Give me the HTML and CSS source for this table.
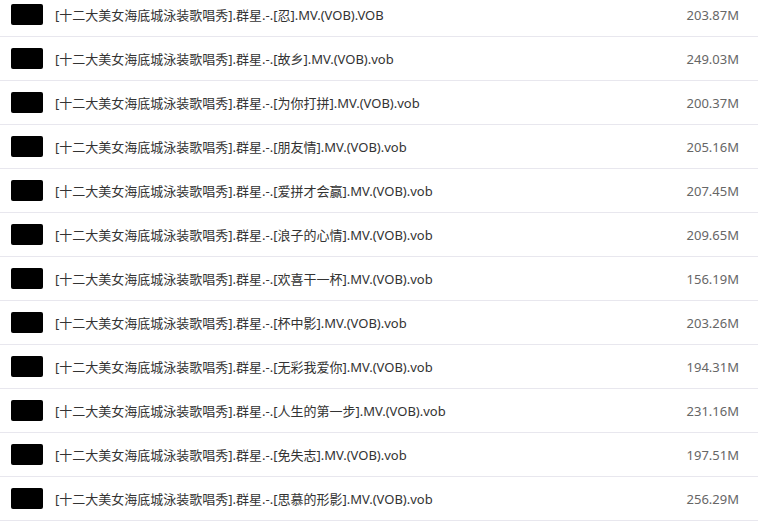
FILE: index.html
```html
<!DOCTYPE html>
<html lang="zh-CN">
<head>
  <meta charset="UTF-8" />
  <title>文件列表</title>
  <link rel="stylesheet" href="styles.css">
</head>
<body>
  <ul class="files">
    <li class="file"><span class="thumb"></span><span class="name">[十二大美女海底城泳装歌唱秀].群星.-.[忍].MV.(VOB).VOB</span><span class="size">203.87M</span></li>
    <li class="file"><span class="thumb"></span><span class="name">[十二大美女海底城泳装歌唱秀].群星.-.[故乡].MV.(VOB).vob</span><span class="size">249.03M</span></li>
    <li class="file"><span class="thumb"></span><span class="name">[十二大美女海底城泳装歌唱秀].群星.-.[为你打拼].MV.(VOB).vob</span><span class="size">200.37M</span></li>
    <li class="file"><span class="thumb"></span><span class="name">[十二大美女海底城泳装歌唱秀].群星.-.[朋友情].MV.(VOB).vob</span><span class="size">205.16M</span></li>
    <li class="file"><span class="thumb"></span><span class="name">[十二大美女海底城泳装歌唱秀].群星.-.[爱拼才会赢].MV.(VOB).vob</span><span class="size">207.45M</span></li>
    <li class="file"><span class="thumb"></span><span class="name">[十二大美女海底城泳装歌唱秀].群星.-.[浪子的心情].MV.(VOB).vob</span><span class="size">209.65M</span></li>
    <li class="file"><span class="thumb"></span><span class="name">[十二大美女海底城泳装歌唱秀].群星.-.[欢喜干一杯].MV.(VOB).vob</span><span class="size">156.19M</span></li>
    <li class="file"><span class="thumb"></span><span class="name">[十二大美女海底城泳装歌唱秀].群星.-.[杯中影].MV.(VOB).vob</span><span class="size">203.26M</span></li>
    <li class="file"><span class="thumb"></span><span class="name">[十二大美女海底城泳装歌唱秀].群星.-.[无彩我爱你].MV.(VOB).vob</span><span class="size">194.31M</span></li>
    <li class="file"><span class="thumb"></span><span class="name">[十二大美女海底城泳装歌唱秀].群星.-.[人生的第一步].MV.(VOB).vob</span><span class="size">231.16M</span></li>
    <li class="file"><span class="thumb"></span><span class="name">[十二大美女海底城泳装歌唱秀].群星.-.[免失志].MV.(VOB).vob</span><span class="size">197.51M</span></li>
    <li class="file"><span class="thumb"></span><span class="name">[十二大美女海底城泳装歌唱秀].群星.-.[思慕的形影].MV.(VOB).vob</span><span class="size">256.29M</span></li>
  </ul>
</body>
</html>
```

FILE: styles.css
```css
* { margin: 0; padding: 0; box-sizing: border-box; }

body {
  background: #fff;
  font-family: "Noto Sans", "Noto Sans CJK SC", sans-serif;
  font-size: 13px;
  color: #333;
  overflow: hidden;
}

.files {
  list-style: none;
  margin-top: -7px;
}

.file {
  display: flex;
  align-items: center;
  height: 44px;
  padding: 0 19px 0 11px;
  border-bottom: 1px solid #e8e7ee;
}

.thumb {
  width: 32px;
  height: 21px;
  background: #000;
  border-radius: 2px;
  flex-shrink: 0;
}

.name {
  flex: 1;
  margin-left: 12px;
  white-space: nowrap;
  overflow: hidden;
}

.size {
  color: #666;
}
```
